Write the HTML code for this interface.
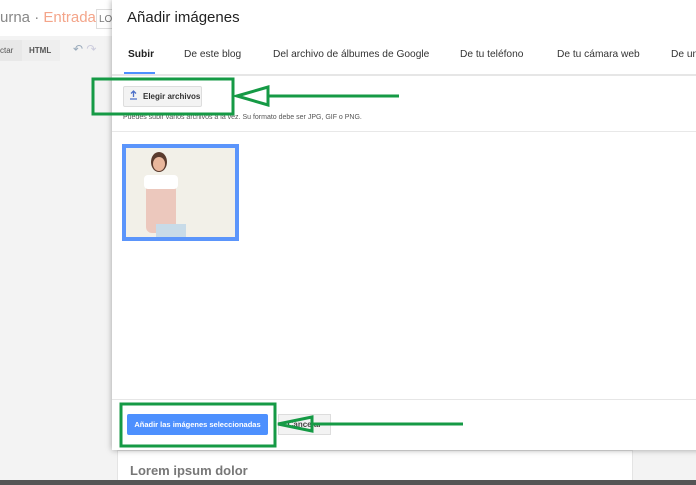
<!DOCTYPE html>
<html><head><meta charset="utf-8"><style>
*{margin:0;padding:0;box-sizing:border-box}
body{width:696px;height:485px;overflow:hidden;position:relative;background:#f3f3f3;font-family:"Liberation Sans",Arial,sans-serif}
.abs{position:absolute}
</style></head><body>
<div class="abs" style="left:0;top:0;width:696px;height:36px;background:#fff"></div>
<div class="abs" style="left:0;top:9px;font-size:15px;color:#888;white-space:nowrap">urna · <span style="color:#f4a58a">Entrada</span></div>
<div class="abs" style="left:96px;top:9px;width:20px;height:20px;border:1px solid #ddd;font-size:10px;color:#777;padding:4px 2px">LO</div>
<div class="abs" style="left:0;top:40px;width:60px;height:21px;background:#e8e8e8"></div>
<div class="abs" style="left:0;top:46px;font-size:8px;color:#555">ctar</div>
<div class="abs" style="left:22px;top:40px;width:38px;height:21px;background:#eee;font-size:8px;font-weight:bold;color:#555;padding:6px 7px">HTML</div>
<div class="abs" style="left:73px;top:42px;font-size:12px;color:#9ab">↶ <span style="color:#ccd">↷</span></div>
<div class="abs" style="left:117px;top:450px;width:516px;height:31px;background:#fff;border:1px solid #e4e4e4"></div>
<div class="abs" style="left:130px;top:463px;font-size:13px;font-weight:bold;color:#777">Lorem ipsum dolor</div>
<div class="abs" style="left:0;top:480px;width:696px;height:5px;background:#555"></div>
<div class="abs" style="left:112px;top:0;width:590px;height:450px;background:#fff;box-shadow:0 0 6px rgba(0,0,0,.35)"></div>
<div class="abs" style="left:127px;top:9px;font-size:15px;color:#222">Añadir imágenes</div>
<div class="abs" style="left:112px;top:74px;width:590px;height:2px;background:#e6e6e6"></div>
<div class="abs" style="top:49px;left:0;width:696px;font-size:10.2px;color:#333;white-space:nowrap">
<span class="abs" style="left:128px;font-weight:bold;color:#222">Subir</span>
<span class="abs" style="left:184px">De este blog</span>
<span class="abs" style="left:273px">Del archivo de álbumes de Google</span>
<span class="abs" style="left:460px">De tu teléfono</span>
<span class="abs" style="left:557px">De tu cámara web</span>
<span class="abs" style="left:671px">De un</span>
</div>
<div class="abs" style="left:124px;top:72px;width:31px;height:2px;background:#4d90fe"></div>
<div class="abs" style="left:123px;top:86px;width:79px;height:21px;background:#f3f3f3;border:1px solid #ddd;border-radius:2px;font-size:8px;font-weight:bold;color:#333;padding:5px 0 0 19px;white-space:nowrap">Elegir archivos</div>
<svg class="abs" style="left:129px;top:90px" width="9" height="10"><path d="M4.5 1V7M2 3.5L4.5 1L7 3.5M1 9H8" stroke="#4d70c8" stroke-width="1.3" fill="none"/></svg>
<div class="abs" style="left:123px;top:114px;font-size:7px;color:#555;white-space:nowrap">Puedes subir varios archivos a la vez. Su formato debe ser JPG, GIF o PNG.</div>
<div class="abs" style="left:112px;top:131px;width:590px;height:1px;background:#e8e8e8"></div>
<div class="abs" style="left:122px;top:144px;width:117px;height:97px;background:#5b95fb;padding:4px">
 <div style="position:relative;width:109px;height:89px;background:#f2f0e8;overflow:hidden">
  <div class="abs" style="left:20px;top:35px;width:30px;height:50px;background:#ecc8bd;border-radius:6px"></div>
  <div class="abs" style="left:25px;top:4px;width:16px;height:20px;background:#5a3b2e;border-radius:50%"></div>
  <div class="abs" style="left:27px;top:9px;width:12px;height:14px;background:#e9b79c;border-radius:50%"></div>
  <div class="abs" style="left:18px;top:27px;width:34px;height:14px;background:#fff;border-radius:4px"></div>
  <div class="abs" style="left:30px;top:76px;width:30px;height:14px;background:#c8dbe8"></div>
 </div>
</div>
<div class="abs" style="left:112px;top:399px;width:590px;height:1px;background:#e6e6e6"></div>
<div class="abs" style="left:127px;top:414px;width:141px;height:21px;background:#4d90fe;border-radius:2px;font-size:7.5px;font-weight:bold;color:#fff;text-align:center;line-height:21px">Añadir las imágenes seleccionadas</div>
<div class="abs" style="left:278px;top:414px;width:53px;height:21px;background:#f3f3f3;border:1px solid #ddd;font-size:8px;font-weight:bold;color:#444;text-align:center;line-height:19px">Cancelar</div>
<svg class="abs" style="left:0;top:0" width="696" height="485">
<g fill="none" stroke="#159a45" stroke-width="3">
<rect x="93" y="79" width="140" height="35"/>
<line x1="268" y1="96" x2="399" y2="96"/>
<polygon points="237,96 268,87 268,105"/>
<rect x="121" y="404" width="154" height="42"/>
<line x1="312" y1="424" x2="463" y2="424"/>
<polygon points="278,424 312,417 312,431"/>
</g>
</svg>
</body></html>
